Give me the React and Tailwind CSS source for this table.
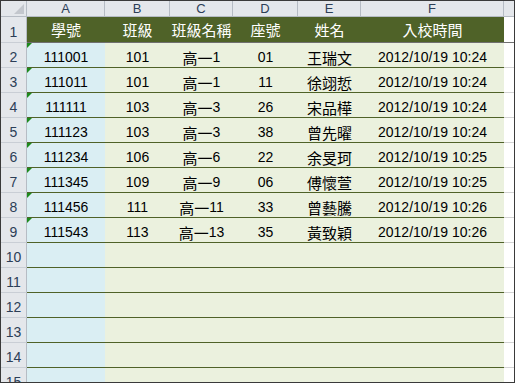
const COLS = ["A", "B", "C", "D", "E", "F"];
const WIDTHS = ["w-[78px]", "w-[65px]", "w-[63px]", "w-[65px]", "w-[63px]", "w-[143px]"];

const HEAD = ["學號", "班級", "班級名稱", "座號", "姓名", "入校時間"];

const ROWS = [
  ["111001", "101", "高一1", "01", "王瑞文", "2012/10/19 10:24"],
  ["111011", "101", "高一1", "11", "徐翊悊", "2012/10/19 10:24"],
  ["111111", "103", "高一3", "26", "宋品樺", "2012/10/19 10:24"],
  ["111123", "103", "高一3", "38", "曾先曜", "2012/10/19 10:24"],
  ["111234", "106", "高一6", "22", "余旻珂", "2012/10/19 10:25"],
  ["111345", "109", "高一9", "06", "傅懷萱", "2012/10/19 10:25"],
  ["111456", "111", "高一11", "33", "曾藝騰", "2012/10/19 10:26"],
  ["111543", "113", "高一13", "35", "黃致穎", "2012/10/19 10:26"],
];

const EMPTY = [10, 11, 12, 13, 14, 15];

// CJK runs are set a touch larger, like PMingLiU next to Arial in Excel
function Mixed({ text }) {
  const parts = text.split(/([\u3000-\u9fff]+)/).filter(Boolean);
  return parts.map((p, i) =>
    /[\u3000-\u9fff]/.test(p) ? (
      <span key={i} className="text-[15px] font-['Noto_Sans_CJK_TC',sans-serif]">
        {p}
      </span>
    ) : (
      <span key={i}>{p}</span>
    )
  );
}

function RowHead({ n, h }) {
  return (
    <div
      className={`${h} w-[26px] shrink-0 border-r border-b border-r-[#b6bcc4] border-b-[#c9ced5] bg-[#e4e7eb] flex items-end justify-center pb-[2px] text-[14px] leading-[16px] text-[#2c3e57]`}
    >
      {n}
    </div>
  );
}

function Flag() {
  return (
    <svg className="absolute left-0 top-0" width="5" height="5" viewBox="0 0 5 5">
      <polygon points="0,0 5,0 0,5" fill="#1d8a1d" />
    </svg>
  );
}

export default function App() {
  return (
    <div className="h-[383px] w-[515px] overflow-hidden border border-[#3a3a3a] bg-white font-['Liberation_Sans',Arial,'Noto_Sans_CJK_TC',sans-serif] text-black">
      {/* column letters */}
      <div className="flex h-[16px]">
        <div className="relative w-[26px] shrink-0 border-r border-b border-[#b6bcc4] bg-[#e4e7eb]">
          <svg className="absolute right-[2px] bottom-[2px]" width="10" height="10" viewBox="0 0 10 10">
            <polygon points="10,0 10,10 0,10" fill="#c3c7cd" />
          </svg>
        </div>
        {COLS.map((c, i) => (
          <div
            key={c}
            className={`${WIDTHS[i]} shrink-0 border-r border-b border-[#b6bcc4] bg-[#e4e7eb] flex items-center justify-center text-[13px] leading-[15px] text-[#2c3e57]`}
          >
            {c}
          </div>
        ))}
        <div className="w-[10px] shrink-0 border-b border-[#b6bcc4] bg-[#e4e7eb]" />
      </div>

      {/* title row */}
      <div className="flex h-[26px]">
        <RowHead n={1} h="h-[26px]" />
        {HEAD.map((t, i) => (
          <div
            key={t}
            className={`${WIDTHS[i]} shrink-0 border-b border-[#707070] bg-[#4f6228] flex items-end justify-center pb-[3px] leading-[18px] text-white`}
          >
            <Mixed text={t} />
          </div>
        ))}
        <div className="w-[10px] shrink-0 border-b border-[#707070]" />
      </div>

      {ROWS.map((r, ri) => (
        <div key={ri} className="flex h-[25px]">
          <RowHead n={ri + 2} h="h-[25px]" />
          {r.map((v, i) => (
            <div
              key={i}
              className={`${WIDTHS[i]} relative shrink-0 border-b border-[#4f6228] ${
                i === 0 ? "bg-[#daeef3]" : "bg-[#ebf1de]"
              } flex items-end justify-center pb-[1px] text-[14px] leading-[17px]`}
            >
              {i === 0 && <Flag />}
              <Mixed text={v} />
            </div>
          ))}
          <div className="w-[10px] shrink-0 border-b border-[#d4d4d4]" />
        </div>
      ))}

      {EMPTY.map((n) => (
        <div key={n} className="flex h-[25px]">
          <RowHead n={n} h="h-[25px]" />
          {COLS.map((c, i) => (
            <div
              key={c}
              className={`${WIDTHS[i]} shrink-0 border-b border-[#4f6228] ${
                i === 0 ? "bg-[#daeef3]" : "bg-[#ebf1de]"
              }`}
            />
          ))}
          <div className="w-[10px] shrink-0 border-b border-[#d4d4d4]" />
        </div>
      ))}
    </div>
  );
}
